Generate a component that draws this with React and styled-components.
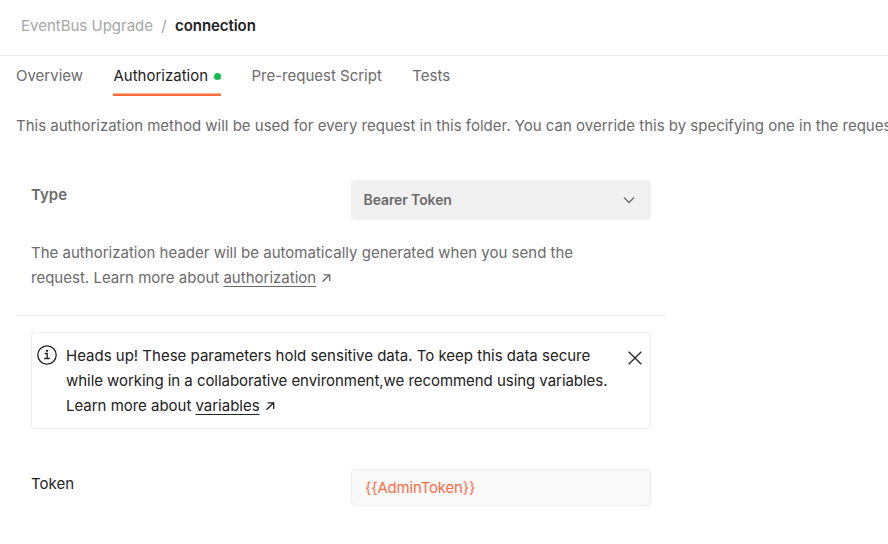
import React from "react";
import styled, { createGlobalStyle } from "styled-components";

const Global = createGlobalStyle`
  *{box-sizing:border-box}
  html,body{margin:0;background:#fff;overflow:hidden}
  body{font-family:Inter,sans-serif;font-size:15px;color:#6b6b6b;line-height:25px}
`;
const Page = styled.main`width:888px;height:544px;overflow:hidden;display:flex;flex-direction:column;`;
const Crumbs = styled.header`height:56px;flex:none;border-bottom:1px solid #ededed;padding:13px 21px 0;display:flex;color:#a6a6a6;`;
const Slash = styled.span`width:22px;text-align:center;color:#a0a0a0;`;
const Current = styled.span`color:#212121;font-weight:600;letter-spacing:-.06px;`;
const Tabs = styled.nav`display:flex;height:40px;flex:none;padding-left:16px;gap:30.4px;`;
const Tab = styled.div`
  display:flex;align-items:center;white-space:nowrap;padding-top:1px;
  color:${p => (p.$active ? "#212121" : "#6b6b6b")};
  border-bottom:2px solid ${p => (p.$active ? "#ff6c37" : "transparent")};
  box-shadow:${p => (p.$active ? "inset 0 -1px #ffb59b" : "none")};
`;
const Dot = styled.i`width:7px;height:7px;border-radius:50%;background:#0cbb52;margin:2px 0 0 6px;`;
const Intro = styled.p`margin:17px 0 0 16px;white-space:nowrap;`;
const TypeSection = styled.section`width:650px;height:178px;flex:none;margin:0 0 0 16px;padding:42px 15px 0;border-bottom:1px solid #ededed;`;
const Row = styled.div`display:flex;justify-content:space-between;`;
const Label = styled.label`font-weight:${p => (p.$strong ? 600 : 400)};color:${p => (p.$strong ? "#6b6b6b" : "#212121")};padding-top:2px;`;
const Select = styled.div`width:300px;height:40px;border-radius:4px;background:#f1f1f1;display:flex;align-items:center;justify-content:space-between;padding:0 15px 1px 12.5px;font-weight:600;font-size:14px;letter-spacing:-.1px;`;
const Chevron = styled.svg`margin-top:1px;`;
const Help = styled.p`margin:20px 0 0;white-space:nowrap;letter-spacing:.01px;`;
const Link = styled.a`text-decoration:underline;text-underline-offset:3px;text-decoration-thickness:1px;`;
const ArrowIcon = styled.svg`width:9px;height:9px;margin-left:6px;`;
const Notice = styled.aside`width:620px;height:97px;flex:none;margin:16px 0 0 31px;border:1px solid #ededed;border-radius:4px;display:flex;color:#212121;padding:11px 8px 0 5px;`;
const NoticeText = styled.p`margin:-1px 0 0;flex:1;white-space:nowrap;padding-left:9px;`;
const NoticeLine = styled.span`display:block;letter-spacing:${p => p.$spacing || "0"};`;
const TokenRow = styled(Row)`width:620px;margin:40px 0 0 31px;`;
const Input = styled.div`width:300px;height:37px;border:1px solid #ededed;border-radius:4px;background:#f9f9f9;padding:5px 13px;color:#ff6c47;letter-spacing:-.18px;`;

const Arrow = () => (
  <ArrowIcon viewBox="0 0 9 9" fill="none" stroke="currentColor" strokeWidth="1.3"><path d="M.5 7.8 7.6.7M1.5.9h6.2v6.2" /></ArrowIcon>
);

export default function App() {
  return (
    <Page>
      <Global />
      <Crumbs><span>EventBus Upgrade</span><Slash>/</Slash><Current>connection</Current></Crumbs>
      <Tabs>
        <Tab>Overview</Tab><Tab $active>Authorization<Dot /></Tab><Tab>Pre-request Script</Tab><Tab>Tests</Tab>
      </Tabs>
      <Intro>This authorization method will be used for every request in this folder. You can override this by specifying one in the request.</Intro>
      <TypeSection>
        <Row><Label $strong>Type</Label>
          <Select>Bearer Token
            <Chevron width="14" height="14" viewBox="0 0 14 14" fill="none" stroke="#6b6b6b" strokeWidth="1.3"><path d="m2 4.5 5 5 5-5" /></Chevron>
          </Select>
        </Row>
        <Help>The authorization header will be automatically generated when you send the<br />request. Learn more about <Link>authorization</Link><Arrow /></Help>
      </TypeSection>
      <Notice>
        <svg width="20" height="22" viewBox="0 0 20 22" fill="none" stroke="#212121" strokeWidth="1.3"><circle cx="10" cy="11" r="9.2" /><path d="M7.7 9.5h2.5v5M7.2 14.5h5.6" /><circle cx="10" cy="6.8" r=".5" fill="#212121" /></svg>
        <NoticeText>
          <NoticeLine>Heads up! These parameters hold sensitive data. To keep this data secure</NoticeLine>
          <NoticeLine $spacing="-.045px">while working in a collaborative environment,we recommend using variables.</NoticeLine>
          <NoticeLine $spacing="-.02px">Learn more about <Link>variables</Link><Arrow /></NoticeLine>
        </NoticeText>
        <svg width="14" height="28" viewBox="0 0 14 28" fill="none" stroke="#212121" strokeWidth="1.3"><path d="m.7 7.7 12.6 12.6m0-12.6L.7 20.3" /></svg>
      </Notice>
      <TokenRow><Label>Token</Label><Input>{"{{AdminToken}}"}</Input></TokenRow>
    </Page>
  );
}
